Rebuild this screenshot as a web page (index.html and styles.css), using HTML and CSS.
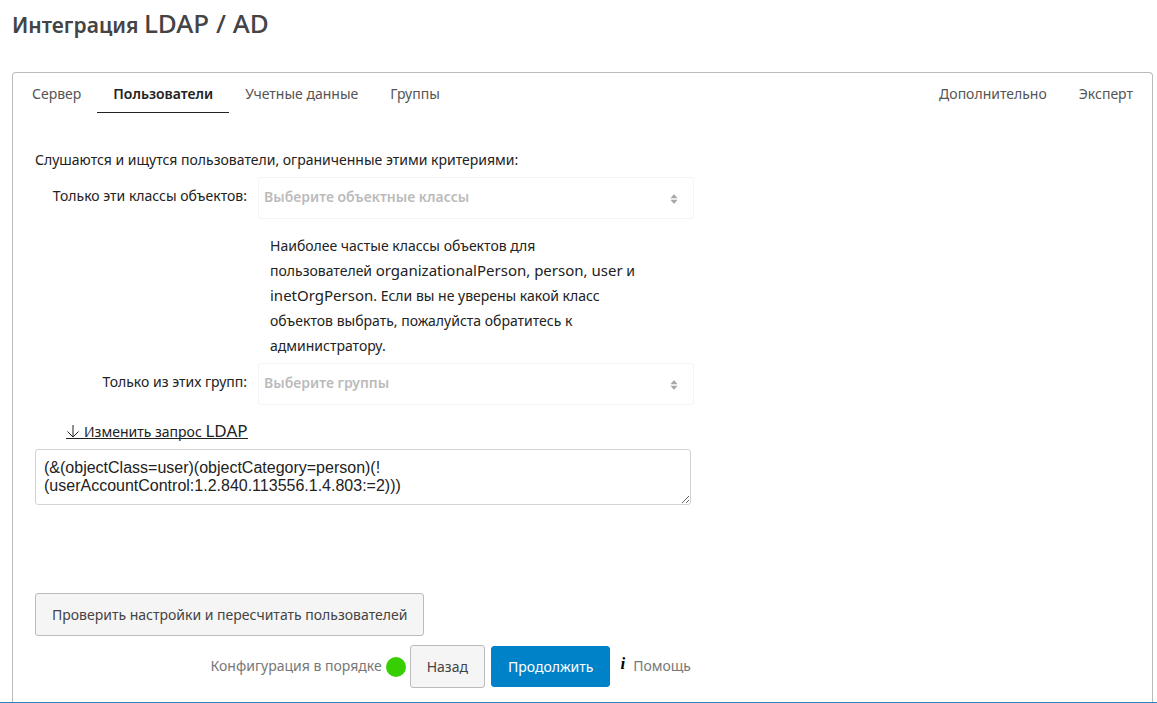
FILE: index.html
```
<!DOCTYPE html>
<html lang="ru">
<head>
<meta charset="utf-8">
<title>Интеграция LDAP / AD</title>
<link rel="stylesheet" href="styles.css">
</head>
<body>
<main class="page">
  <h1 class="title">Интеграция <span class="title-latin">LDAP / AD</span></h1>
  <section class="panel">
    <nav class="tabs">
      <a class="tab" href="#server">Сервер</a>
      <a class="tab tab-active" href="#users" aria-current="page">Пользователи</a>
      <a class="tab" href="#login">Учетные данные</a>
      <a class="tab" href="#groups">Группы</a>
      <a class="tab tab-push" href="#advanced">Дополнительно</a>
      <a class="tab" href="#expert">Эксперт</a>
    </nav>
    <form class="form">
      <p class="intro">Слушаются и ищутся пользователи, ограниченные этими критериями:</p>
      <div class="row">
        <label class="label" for="classes">Только эти классы объектов:</label>
        <div class="picker">
          <select class="select" id="classes" disabled><option>Выберите объектные классы</option></select>
          <svg class="arrows" viewBox="0 0 8 10" aria-hidden="true"><path d="M4 0 7.500 4.200h-7zM.5 5.800h7L4 10z"/></svg>
        </div>
      </div>
      <p class="hint">Наиболее частые классы объектов для пользователей <span class="latin">organizationalPerson, person, user</span> и <span class="latin">inetOrgPerson</span>. Если вы не уверены какой класс объектов выбрать, пожалуйста обратитесь к администратору.</p>
      <div class="row">
        <label class="label" for="groups">Только из этих групп:</label>
        <div class="picker">
          <select class="select" id="groups" disabled><option>Выберите группы</option></select>
          <svg class="arrows" viewBox="0 0 8 10" aria-hidden="true"><path d="M4 0 7.500 4.200h-7zM.5 5.800h7L4 10z"/></svg>
        </div>
      </div>
      <a class="edit" href="#query"><svg class="down" viewBox="0 0 14 14" aria-hidden="true"><path d="M7 1v12M1.500 7.500 7 13l5.500-5.500"/></svg><span>Изменить запрос <span class="edit-latin">LDAP</span></span></a>
      <textarea class="query" aria-label="Запрос LDAP" spellcheck="false">(&amp;(objectClass=user)(objectCategory=person)(!
(userAccountControl:1.2.840.113556.1.4.803:=2)))</textarea>
      <button class="button check" type="button">Проверить настройки и пересчитать пользователей</button>
      <div class="footer">
        <span class="status">Конфигурация в порядке</span>
        <span class="dot"></span>
        <button class="button back" type="button">Назад</button>
        <button class="button primary" type="button">Продолжить</button>
        <a class="help" href="#help"><span class="info">i</span>Помощь</a>
      </div>
    </form>
  </section>
</main>
</body>
</html>
```

FILE: styles.css
```
* { box-sizing: border-box; }
body {
  margin: 0;
  background: #fff;
  color: #222;
  font: 14px/25px "Noto Sans", sans-serif;
}
.page {
  display: flex;
  flex-direction: column;
  min-height: 100vh;
  padding: 7px 4px 0 12px;
  border-bottom: 1px solid #2f7fb8;
}
.title {
  margin: 0 0 31px;
  color: #444;
  font-size: 21px;
  line-height: 32px;
  font-weight: 600;
}
.title-latin { font-size: 26px; font-weight: 500; }
.latin { font-size: 15px; }
.panel {
  flex: 1;
  border: 1px solid #bbb;
  border-bottom: 0;
  border-radius: 4px 4px 0 0;
}
.tabs { display: flex; padding: 2px 3px 0; }
.tab {
  padding: 6px 16px;
  border-bottom: 1px solid transparent;
  color: #555;
  text-decoration: none;
}
.tab-active { border-bottom-color: #222; color: #222; font-weight: 600; }
.tab-push { margin-left: auto; }
.form {
  display: flex;
  flex-direction: column;
  max-width: 704px;
  padding: 34px 22px 12px;
}
.intro { margin: 0 0 5px; }
.row { display: grid; grid-template-columns: 212px 436px; gap: 11px; }
.label { padding-top: 6px; text-align: right; }
.picker { position: relative; }
.select {
  display: block;
  width: 100%;
  height: 42px;
  padding: 0 5px 4px;
  border: 1px solid #f4f4f4;
  border-radius: 3px;
  background: #fff;
  color: #bbb;
  font: inherit;
  font-weight: 600;
  appearance: none;
  opacity: 1;
}
.arrows {
  position: absolute;
  top: 17px;
  right: 16px;
  width: 8px;
  height: 10px;
  fill: #a4a7ac;
}
.hint { width: 368px; margin: 14px 0 5px 235px; }
.edit {
  display: flex;
  align-self: flex-start;
  align-items: center;
  gap: 4px;
  height: 15px;
  margin: 19px 0 10px 31px;
  border-bottom: 1px solid #222;
  color: #222;
  line-height: 14px;
  text-decoration: none;
}
.edit-latin { font-size: 17px; }
.down { width: 14px; height: 14px; fill: none; stroke: #222; }
.query {
  width: 656px;
  height: 56px;
  padding: 9px 8px;
  border: 1px solid #d3d3d3;
  border-radius: 3px;
  color: #222;
  font: 16px/18px "Liberation Sans", Arial, sans-serif;
  resize: both;
}
.button {
  height: 43px;
  padding: 0 16px;
  border: 1px solid #bbb;
  border-radius: 3px;
  background: #f5f5f5;
  color: #444;
  font: inherit;
}
.check { align-self: flex-start; margin: 88px 0 9px; }
.footer {
  display: flex;
  align-items: center;
  justify-content: flex-end;
  width: 656px;
  color: #777;
}
.status, .help { padding-bottom: 2px; }
.dot { width: 20px; height: 20px; margin: 0 4px; border-radius: 50%; background: #37ce02; }
.back { margin-right: 6px; }
.primary {
  height: 41px;
  border-color: #0082c9;
  background: #0082c9;
  color: #fff;
}
.help { display: flex; gap: 8px; margin-left: 10px; color: #777; text-decoration: none; }
.info { color: #000; font: italic 700 17px/22px "Liberation Serif", serif; }
```
